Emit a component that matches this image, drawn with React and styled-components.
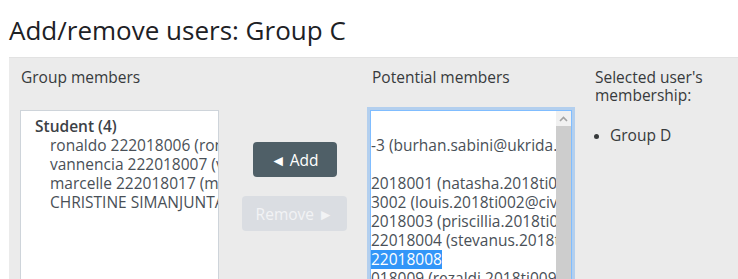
import React from "react";
import styled, { createGlobalStyle } from "styled-components";

const GlobalStyle = createGlobalStyle`
  body {
    margin: 0;
    background: #fff;
    font-family: "Open Sans", "Noto Sans", sans-serif;
    color: #373a3c;
  }
`;

// the list boxes are scrolled / cut, so only the visible part is kept
const members = [
  "ronaldo 222018006 (rona",
  "vannencia 222018007 (va",
  "marcelle 222018017 (mar",
  "CHRISTINE SIMANJUNTA",
];

const potential = [
  { text: "", group: true },
  { text: "-3 (burhan.sabini@ukrida.a" },
  { text: "", group: true },
  { text: "2018001 (natasha.2018ti0" },
  { text: "3002 (louis.2018ti002@civ" },
  { text: "2018003 (priscillia.2018ti0" },
  { text: "22018004 (stevanus.2018ti" },
  { text: "22018008", selected: true },
  { text: "018009 (rezaldi.2018ti009@" },
];

function App() {
  return (
    <Page>
      <GlobalStyle />
      <Title>Add/remove users: Group C</Title>
      <Panel>
        <Columns>
          <Label>Group members</Label>
          <span />
          <Label $shift={2}>Potential members</Label>
          <SideInfo>
            <SideLabel>Selected user's membership:</SideLabel>
            <GroupList>
              <li>Group D</li>
            </GroupList>
          </SideInfo>

          <ListBox $width={199}>
            <ListText>
              <GroupLabel>Student (4)</GroupLabel>
              {members.map((m) => (
                <Option key={m}>{m}</Option>
              ))}
            </ListText>
          </ListBox>

          <Actions>
            <ActionButton $w={84}>◄ Add</ActionButton>
            <ActionButton $w={105} disabled>
              Remove ►
            </ActionButton>
          </Actions>

          <ListBox $width={202} $focused>
            <ListText $flush>
              {potential.map((o, i) => (
                <Option key={i} $flush>
                  {o.group ? "\u00a0" : o.selected ? <Picked>{o.text}</Picked> : o.text}
                </Option>
              ))}
            </ListText>
            <ScrollBar>
              <ScrollArrow>
                <svg width="9" height="6" viewBox="0 0 9 6">
                  <polyline
                    points="1,5 4.5,1.5 8,5"
                    fill="none"
                    stroke="#a3a3a3"
                    strokeWidth="1.6"
                  />
                </svg>
              </ScrollArrow>
              <ScrollThumb />
            </ScrollBar>
          </ListBox>
        </Columns>
      </Panel>
    </Page>
  );
}

const Page = styled.div`
  padding: 15px 0 0 9px;
  height: 279px;
  box-sizing: border-box;
  overflow: hidden;
`;

const Title = styled.h2`
  margin: 0 0 11px;
  font-size: 26px;
  font-weight: 400;
  line-height: 31px;
  color: #1d2125;
  white-space: nowrap;
`;

const Panel = styled.div`
  background: #ebebeb;
  border-top: 1px solid #e2e2e2;
  padding: 10px 0 0 11px;
  height: 260px;
`;

const Columns = styled.div`
  display: grid;
  grid-template-columns: 199px 151px 202px 140px;
  grid-template-rows: 42px auto;
  align-items: start;
`;

const Label = styled.div`
  font-size: 15.5px;
  line-height: 18px;
  padding-left: ${(p) => p.$shift || 1}px;
  white-space: nowrap;
`;

const SideInfo = styled.div`
  grid-column: 4;
  grid-row: 1 / span 2;
  margin-left: 23px;
`;

const SideLabel = styled.div`
  font-size: 15.5px;
  line-height: 18px;
  width: 120px;
`;

const GroupList = styled.ul`
  margin: 22px 0 0;
  padding-left: 15px;
  font-size: 15.5px;
  line-height: 18px;
  li::marker {
    font-size: 13px;
  }
`;

const ListBox = styled.div`
  display: flex;
  width: ${(p) => p.$width}px;
  height: 200px;
  box-sizing: border-box;
  background: #fff;
  border: 1px solid ${(p) => (p.$focused ? "#80bdff" : "#ced4da")};
  box-shadow: ${(p) => (p.$focused ? "0 0 0 3px #b3cfee" : "none")};
  overflow: hidden;
`;

const ListText = styled.div`
  flex: 1;
  min-width: 0;
  overflow: hidden;
  padding: 6px 0 0 ${(p) => (p.$flush ? 0 : 14)}px;
  font-size: 15.5px;
  line-height: 19px;
  color: #495057;
`;

const GroupLabel = styled.div`
  font-weight: 600;
  color: #3c4146;
  white-space: nowrap;
`;

const Option = styled.div`
  white-space: nowrap;
  overflow: hidden;
  padding-left: ${(p) => (p.$flush ? 0 : 15)}px;
`;

const Picked = styled.span`
  background: #3296f8;
  color: #fff;
`;

const ScrollBar = styled.div`
  width: 15px;
  display: flex;
  flex-direction: column;
`;

const ScrollArrow = styled.div`
  height: 15px;
  background: #f1f1f1;
  display: flex;
  align-items: center;
  justify-content: center;
`;

const ScrollThumb = styled.div`
  flex: 1;
  background: #cdcdcd;
`;

const Actions = styled.div`
  display: flex;
  flex-direction: column;
  align-items: center;
  gap: 19px;
  padding-top: 32px;
`;

const ActionButton = styled.button`
  width: ${(p) => p.$w}px;
  height: 35px;
  border: none;
  border-radius: 4px;
  font-family: "Open Sans", "Noto Sans", sans-serif;
  font-size: 15.5px;
  background: #4f5f67;
  color: #fff;
  &:disabled {
    background: #dadde2;
    color: #f2f3f5;
  }
`;

export default App;
